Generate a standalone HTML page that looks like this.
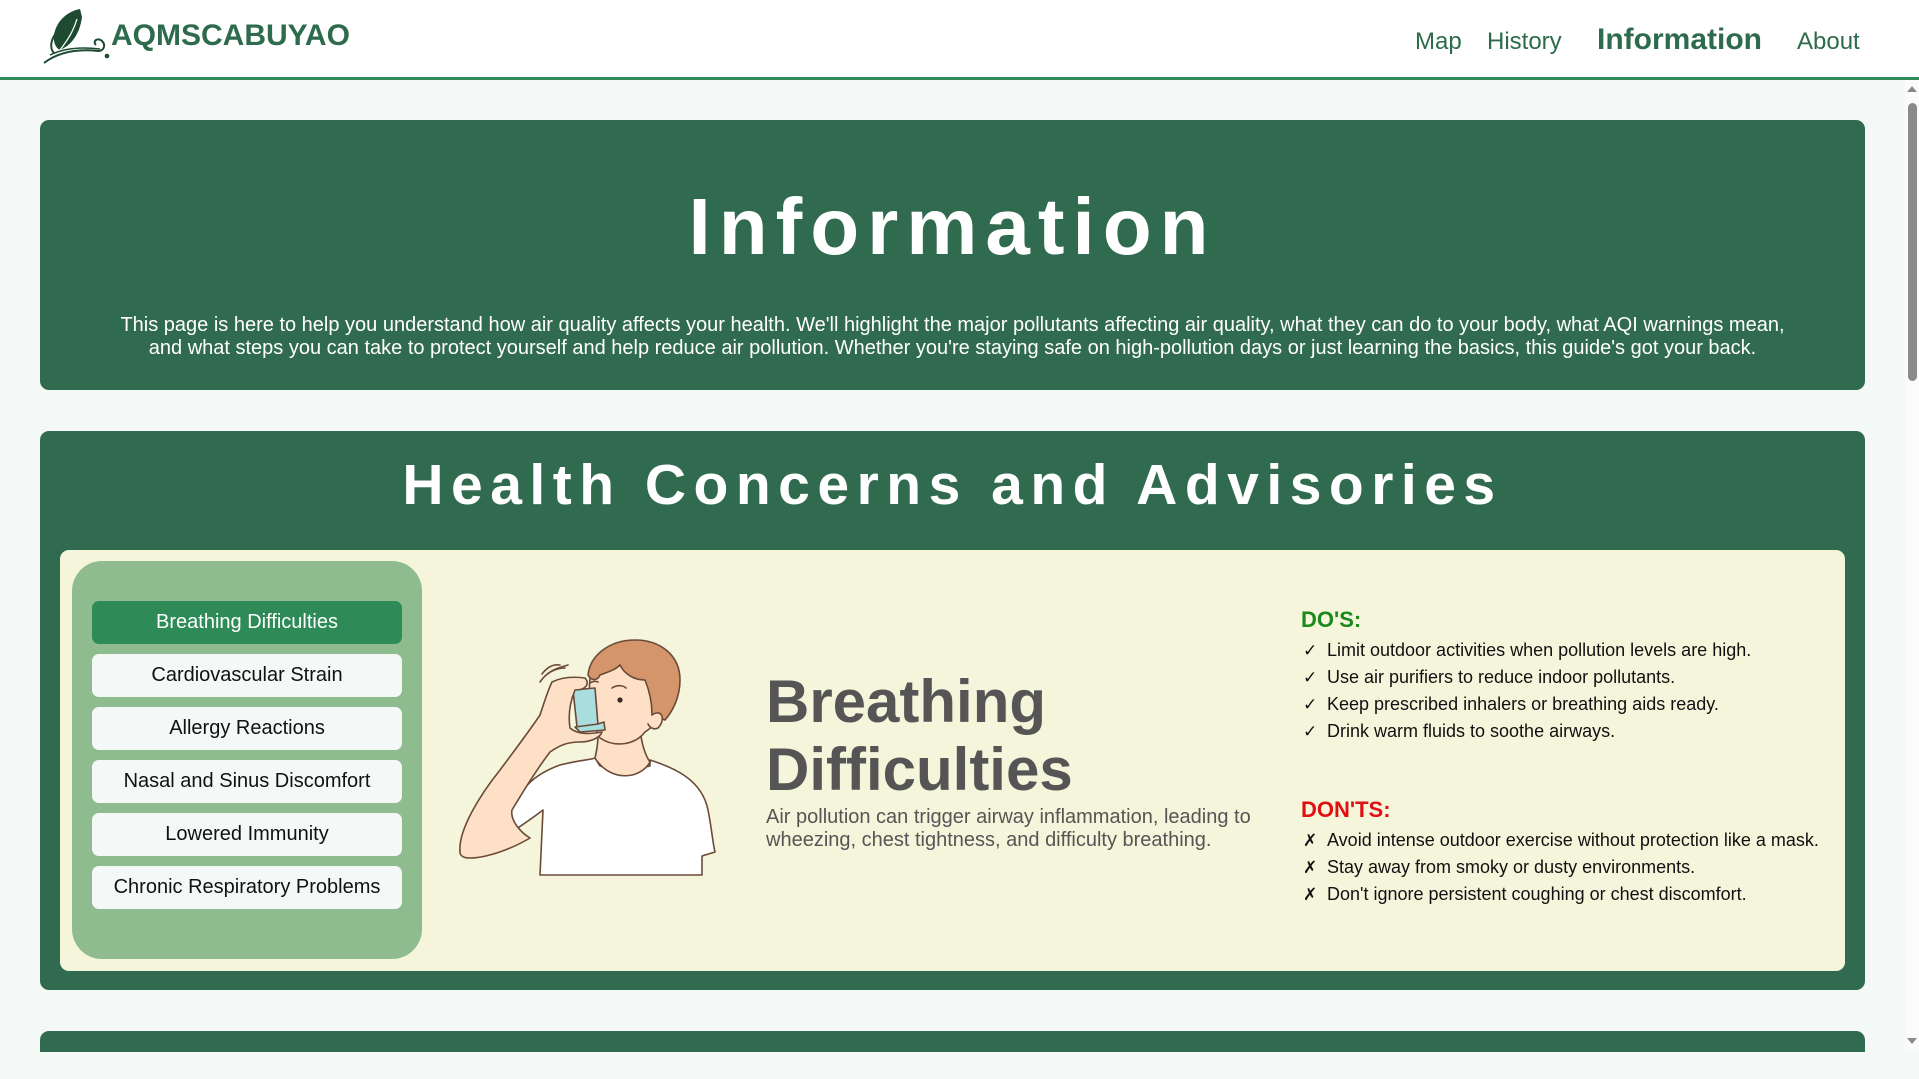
<!DOCTYPE html>
<html><head><meta charset="utf-8">
<style>
*{margin:0;padding:0;box-sizing:border-box}
html,body{width:1919px;height:1079px;overflow:hidden;background:#f4f8f7;font-family:"Liberation Sans",Arial,sans-serif}
.abs{position:absolute}
#hdr{left:0;top:0;width:1919px;height:77px;background:#fff}
#hline{left:0;top:77px;width:1919px;height:3px;background:#2e8b57}
.brand{left:111px;top:19px;font-size:30px;font-weight:bold;color:#2e6b4c;letter-spacing:0px}
.nav{top:28px;font-size:24px;color:#2e6b4c}
.card{background:#316b4f;border-radius:9px}
.btn{left:92px;width:310px;height:43px;border-radius:7px;background:#f4f8f7;color:#111;font-size:20px;text-align:center;line-height:43px}
.btn.on{background:#2e8b57;color:#fff}
.li{font-size:18px;color:#111;left:1303px;white-space:nowrap}
.li b{font-weight:normal;font-family:"DejaVu Sans",sans-serif;font-size:17px;display:inline-block;width:24px}
</style></head><body>
<div id="hdr" class="abs"></div>
<div id="hline" class="abs"></div>
<svg class="abs" style="left:40px;top:5px" width="80" height="60" viewBox="0 0 80 60">
<path d="M40 4 C28 6 16 16 14 30 C13 38 16 43 20 45 C32 40 40 28 42 12 Z" fill="#1d4a30"/>
<path d="M20 45 C30 32 34 24 37 14" stroke="#fff" stroke-width="1.3" fill="none"/>
<path d="M16 28 C10 36 10 44 14 48" stroke="#1d4a30" stroke-width="2" fill="none"/>
<path d="M4 58 C20 46 40 44 58 46 C64 46 66 40 62 36 C58 32 52 36 56 40" stroke="#1d4a30" stroke-width="2" fill="none"/>
<path d="M10 50 C26 42 44 42 60 44" stroke="#1d4a30" stroke-width="1.5" fill="none"/>
<circle cx="67" cy="51" r="2.3" fill="#1d4a30"/>
</svg>
<div class="abs brand">AQMSCABUYAO</div>
<div class="abs nav" style="left:1415px">Map</div>
<div class="abs nav" style="left:1487px">History</div>
<div class="abs nav" style="left:1597px;top:23px;font-size:30px;font-weight:bold">Information</div>
<div class="abs nav" style="left:1797px">About</div>

<div class="abs" style="left:1905px;top:80px;width:14px;height:972px;background:#fbfbfb"></div>
<div class="abs" style="left:1908px;top:103px;width:9px;height:278px;background:#8a8a8a;border-radius:5px"></div>
<div class="abs" style="left:1907px;top:86px;width:0;height:0;border-left:5px solid transparent;border-right:5px solid transparent;border-bottom:6px solid #8a8a8a"></div>
<div class="abs" style="left:1907px;top:1038px;width:0;height:0;border-left:5px solid transparent;border-right:5px solid transparent;border-top:6px solid #8a8a8a"></div>

<div class="abs card" style="left:40px;top:120px;width:1825px;height:270px"></div>
<div class="abs" style="left:40px;top:181px;width:1825px;text-align:center;font-size:80px;font-weight:bold;color:#fff;letter-spacing:8px;line-height:92px">Information</div>
<div class="abs" style="left:40px;top:314px;width:1825px;text-align:center;font-size:20px;line-height:23px;color:#fff">This page is here to help you understand how air quality affects your health. We'll highlight the major pollutants affecting air quality, what they can do to your body, what AQI warnings mean,<br>and what steps you can take to protect yourself and help reduce air pollution. Whether you're staying safe on high-pollution days or just learning the basics, this guide's got your back.</div>

<div class="abs card" style="left:40px;top:431px;width:1825px;height:559px"></div>
<div class="abs" style="left:40px;top:452px;width:1825px;text-align:center;font-size:57px;font-weight:bold;color:#fff;letter-spacing:7.5px;line-height:66px">Health Concerns and Advisories</div>
<div class="abs" style="left:60px;top:550px;width:1785px;height:421px;background:#f5f5dc;border-radius:9px"></div>
<div class="abs" style="left:72px;top:561px;width:350px;height:398px;background:#8fbc8f;border-radius:30px"></div>
<div class="abs btn on" style="top:601px">Breathing Difficulties</div>
<div class="abs btn" style="top:654px">Cardiovascular Strain</div>
<div class="abs btn" style="top:707px">Allergy Reactions</div>
<div class="abs btn" style="top:760px">Nasal and Sinus Discomfort</div>
<div class="abs btn" style="top:813px">Lowered Immunity</div>
<div class="abs btn" style="top:866px">Chronic Respiratory Problems</div>

<svg class="abs" style="left:440px;top:620px" width="300" height="270" viewBox="0 0 300 270" fill="none" stroke="#6b4a3a" stroke-width="1.6" stroke-linejoin="round" stroke-linecap="round">
<path d="M100 255 L103 190 C90 200 82 205 72 212 L70 192 C80 170 92 155 120 145 C140 140 150 140 155 138 L160 146 C175 150 195 150 210 146 L210 140 C235 148 262 160 268 190 C272 210 273 225 275 232 L262 236 L262 255 Z" fill="#fff"/>
<path d="M155 138 C158 125 158 118 158 112 L200 110 C202 125 205 135 210 142 C200 160 170 162 155 138 Z" fill="#fde0c5"/>
<path d="M150 58 C148 80 150 100 160 118 C175 128 195 125 205 112 C215 105 222 100 215 90 L212 70 C205 50 180 40 160 45 Z" fill="#fde0c5"/>
<path d="M148 55 C150 35 170 20 195 20 C220 20 240 35 240 60 C240 78 232 92 225 100 L212 95 C212 85 210 72 205 60 C195 60 185 55 180 45 C175 50 168 52 160 55 C158 60 152 62 148 55 Z" fill="#d4956a"/>
<path d="M212 95 C222 88 226 100 218 108 C214 110 210 108 208 104" fill="#fde0c5"/>
<circle cx="180" cy="80" r="2.6" fill="#3a2a22" stroke="none"/>
<circle cx="153" cy="73" r="2.6" fill="#3a2a22" stroke="none"/>
<path d="M172 68 C178 64 184 66 186 68 M150 63 C153 61 156 61 158 62"/>
<path d="M133 70 L155 68 L158 105 L137 107 Z" fill="#a8dede"/>
<path d="M135 107 L158 104 L164 102 L165 110 L140 112 Z" fill="#a8dede"/>
<path d="M20 232 C18 210 40 175 60 150 C75 130 90 110 100 95 C105 80 108 70 112 62 C120 58 130 56 145 58 C150 64 146 70 135 70 C130 82 128 95 130 108 C138 115 150 114 162 112 C160 118 150 122 140 122 C128 122 120 125 110 132 C100 145 90 160 72 190 C70 200 80 212 90 218 C70 230 45 238 30 238 C24 238 20 236 20 232 Z" fill="#fde0c5"/>
<path d="M100 62 C108 50 118 48 128 45 M105 56 C112 50 118 48 125 48 M102 54 C108 46 114 44 120 45" />
</svg>

<div class="abs" style="left:766px;top:668px;font-size:60px;font-weight:bold;color:#555;line-height:68px">Breathing<br>Difficulties</div>
<div class="abs" style="left:766px;top:806px;font-size:20px;color:#555;line-height:23px;white-space:nowrap">Air pollution can trigger airway inflammation, leading to<br>wheezing, chest tightness, and difficulty breathing.</div>

<div class="abs" style="left:1301px;top:607px;font-size:22px;font-weight:bold;color:#1a8a1a">DO'S:</div>
<div class="abs li" style="top:640px"><b>✓</b>Limit outdoor activities when pollution levels are high.</div>
<div class="abs li" style="top:667px"><b>✓</b>Use air purifiers to reduce indoor pollutants.</div>
<div class="abs li" style="top:694px"><b>✓</b>Keep prescribed inhalers or breathing aids ready.</div>
<div class="abs li" style="top:721px"><b>✓</b>Drink warm fluids to soothe airways.</div>
<div class="abs" style="left:1301px;top:797px;font-size:22px;font-weight:bold;color:#e01010">DON'TS:</div>
<div class="abs li" style="top:830px"><b>✗</b>Avoid intense outdoor exercise without protection like a mask.</div>
<div class="abs li" style="top:857px"><b>✗</b>Stay away from smoky or dusty environments.</div>
<div class="abs li" style="top:884px"><b>✗</b>Don't ignore persistent coughing or chest discomfort.</div>

<div class="abs" style="left:40px;top:1031px;width:1825px;height:21px;background:#316b4f;border-radius:9px 9px 0 0"></div>
</body></html>
